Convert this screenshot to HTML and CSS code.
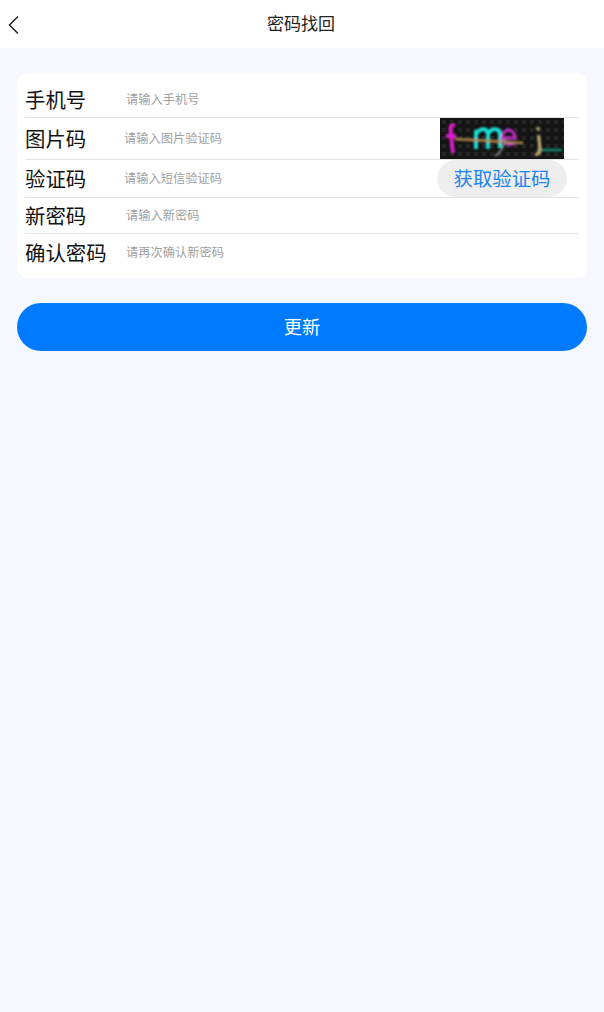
FILE: index.html
```html
<!DOCTYPE html>
<html lang="zh">
<head>
<meta charset="utf-8">
<title>密码找回</title>
<link rel="stylesheet" href="styles.css">
</head>
<body>
<header class="topbar">
  <svg class="back" width="12" height="20" viewBox="0 0 12 20"><path d="M11 1.5 L2.5 10 L11 18.5" fill="none" stroke="#222" stroke-width="1.5"/></svg>
  <h1 class="title">密码找回</h1>
</header>
<main class="content">
  <form class="card">
    <div class="row row-phone"><span class="label">手机号</span><span class="hint">请输入手机号</span></div>
    <div class="row row-img"><span class="label">图片码</span><span class="hint hint-near">请输入图片验证码</span>
      <svg class="captcha" width="124" height="41" viewBox="0 0 124 41">
        <defs>
          <pattern id="dots" width="8" height="8" patternUnits="userSpaceOnUse"><rect width="8" height="8" fill="#141414"/><rect x="2" y="2" width="4" height="4" fill="#242424"/></pattern>
          <filter id="soft" x="-5%" y="-5%" width="110%" height="110%"><feGaussianBlur stdDeviation="0.9"/></filter>
        </defs>
        <rect width="124" height="41" fill="url(#dots)"/>
        <g fill="none" filter="url(#soft)">
          <path d="M15 8 C12 6 10 8 10.5 12 L13 35 M6 18 H16" stroke="#e01fd2" stroke-width="3.8"/>
          <path d="M36 31 V12 M36 16 C41 9 47 10 48 16 V31 M48 16 C52 9 60 10 60 17 V30" stroke="#18e6dc" stroke-width="3.8"/>
          <path d="M62 20 H75 C75 12 66 9 63 16 C60 24 68 29 75 25" stroke="#c62fcb" stroke-width="3"/>
          <path d="M15 21 L83 25" stroke="#b58a48" stroke-width="2.6"/>
          <path d="M65 21 C64 30 60 35 55 38" stroke="#8a8a8a" stroke-width="1.8"/>
          <path d="M97 32 H122" stroke="#0f9c7c" stroke-width="2.2"/>
          <path d="M98 9 V12.5 M98.5 17 L100 31 C100 35 98 37 95 36" stroke="#cdb377" stroke-width="3"/>
        </g>
      </svg>
    </div>
    <div class="row row-sms"><span class="label">验证码</span><span class="hint hint-near">请输入短信验证码</span><button class="sms" type="button">获取验证码</button></div>
    <div class="row row-new"><span class="label">新密码</span><span class="hint">请输入新密码</span></div>
    <div class="row row-confirm"><span class="label">确认密码</span><span class="hint">请再次确认新密码</span></div>
  </form>
  <button class="submit" type="button">更新</button>
</main>
</body>
</html>
```
FILE: styles.css
```css
* { box-sizing: border-box; }
html, body { margin: 0; height: 100%; }
body {
  background: #f5f8ff;
  font-family: "Noto Sans CJK SC", "Noto Sans", sans-serif;
  color: #111;
}
.topbar {
  height: 48px;
  background: #fff;
  display: flex;
  align-items: center;
  justify-content: center;
  position: relative;
}
.back { position: absolute; left: 7px; top: 15px; }
.title { margin: 0 2px 2px 0; font-size: 17px; font-weight: 400; line-height: 46px; color: #222; }
.content { padding: 25px 17px 0; }
.card {
  background: #fff;
  border-radius: 10px;
  padding: 0 8px;
  height: 205px;
  display: flex;
  flex-direction: column;
}
.row {
  display: flex;
  align-items: center;
  border-bottom: 1px solid #e4e4e4;
  position: relative;
}
.row-phone { height: 45px; padding-top: 9px; }
.row-img { height: 42px; }
.row-sms { height: 38px; }
.row-new { height: 36px; }
.row-confirm { height: 44px; border-bottom: 0; padding-bottom: 6px; }
.label { width: 101px; flex: none; font-size: 20.4px; line-height: 28px; margin-top: -2px; color: #111; }
.hint { font-size: 12.25px; line-height: 18px; color: #a0a0a0; margin-top: -2px; }
.hint-near { margin-left: -2px; }
.captcha { position: absolute; left: 415px; top: 0; display: block; }
.sms {
  position: absolute;
  left: 412px;
  top: 0;
  width: 130px;
  height: 37px;
  border: 0;
  padding: 0 0 2px;
  border-radius: 19px;
  background: #eeeeee;
  color: #1c84ee;
  font: inherit;
  font-size: 19.4px;
}
.submit {
  display: block;
  width: 100%;
  height: 48px;
  margin-top: 25px;
  border: 0;
  padding: 0 0 2px;
  border-radius: 24px;
  background: #007aff;
  color: #fff;
  font: inherit;
  font-size: 18.2px;
}
```
